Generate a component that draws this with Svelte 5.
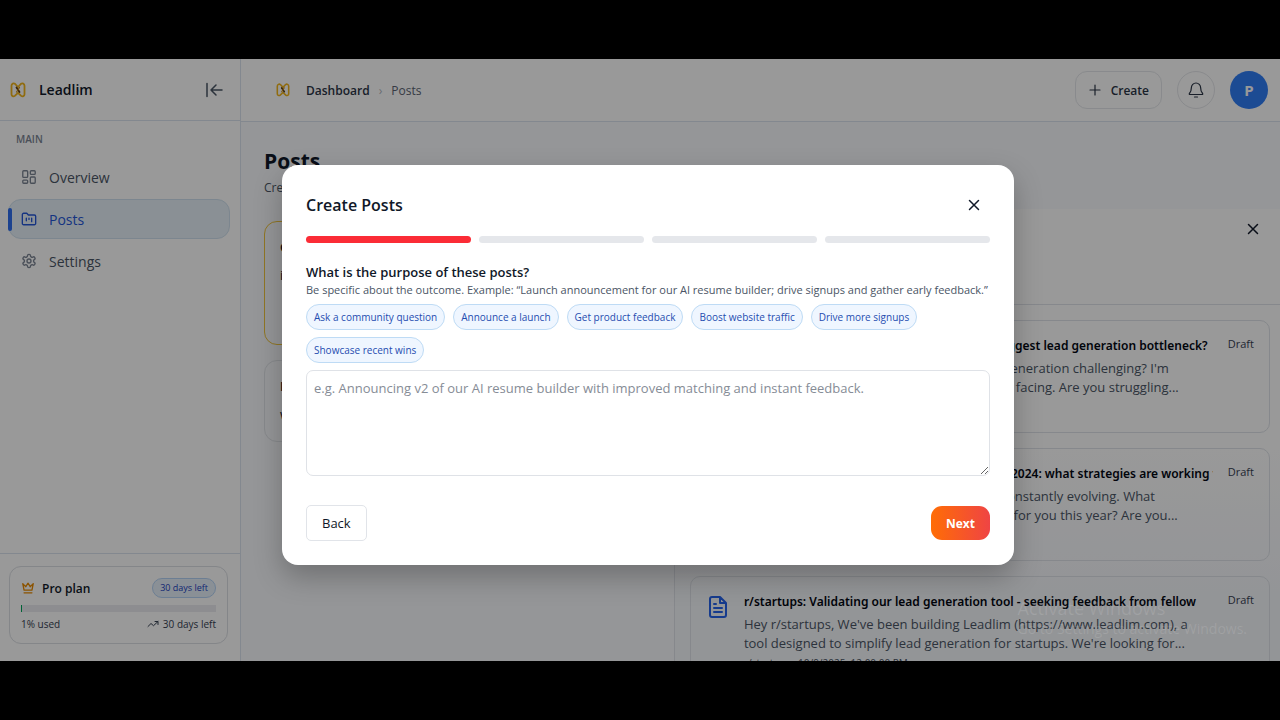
<script>
  const navItems = [
    { label: 'Overview', icon: 'grid', active: false },
    { label: 'Posts', icon: 'folder', active: true },
    { label: 'Settings', icon: 'gear', active: false }
  ];

  const suggestions = [
    'Ask a community question',
    'Announce a launch',
    'Get product feedback',
    'Boost website traffic',
    'Drive more signups',
    'Showcase recent wins'
  ];

  const posts = [
    {
      title: "r/marketing: What is currently your team's biggest lead generation bottleneck?",
      lines: ["Hey everyone, is anybody else finding lead generation challenging? I'm", "curious about the biggest bottlenecks you're facing. Are you struggling..."],
      date: 'r/marketing · 10/9/2025, 12:00:00 PM'
    },
    {
      title: 'r/marketing: Lead generation for B2B SaaS in 2024: what strategies are working for you?',
      lines: ['The lead generation landscape is certainly constantly evolving. What', 'tactics or tools have been the most effective for you this year? Are you...'],
      date: 'r/marketing · 10/9/2025, 12:00:00 PM'
    },
    {
      title: 'r/startups: Validating our lead generation tool - seeking feedback from fellow',
      lines: ["Hey r/startups, We've been building Leadlim (https://www.leadlim.com), a", "tool designed to simplify lead generation for startups. We're looking for..."],
      date: 'r/startups · 10/9/2025, 12:00:00 PM'
    }
  ];

  const totalSteps = 4;
  let step = $state(1);
  let purpose = $state('');
</script>

{#snippet logo()}
  <svg class="logo" viewBox="0 0 16 16" fill="none" stroke-linejoin="round" stroke-linecap="round" aria-hidden="true">
    <path d="M5 1.800 8 5l3-3.200c1.300-1 3.500-.3 3.500 2v8.400c0 2-2 2.700-3.300 1.700L8 10.800l-3.200 3.100c-1.300 1-3.300.3-3.300-1.700V3.800c0-2.300 2.200-3 3.500-2z" stroke="#f0b41c" stroke-width="1.800" />
    <path d="M6.500 5.500 9.500 10" stroke="#5e3d10" stroke-width="1.800" />
    <path d="M9.500 5.500 6.500 10" stroke="#c98a10" stroke-width="1.200" />
  </svg>
{/snippet}

{#snippet cross()}
  <svg class="icon" viewBox="0 0 16 16" aria-hidden="true"><path d="m3.500 3.500 9 9m0-9-9 9" /></svg>
{/snippet}

<div class="screen">
  <div class="app">
    <aside class="sidebar">
      <div class="brand">
        {@render logo()}
        <span class="brand-name">Leadlim</span>
        <button class="collapse" aria-label="Collapse sidebar">
          <svg class="icon" viewBox="0 0 20 20" aria-hidden="true"><path d="M3 3.500v13M18 10H7m5-5-5 5 5 5" /></svg>
        </button>
      </div>

      <nav>
        <p class="nav-title">MAIN</p>
        {#each navItems as item}
          <a class="nav-item" class:active={item.active} href="#{item.label.toLowerCase()}">
            {#if item.icon === 'grid'}
              <svg class="icon" viewBox="0 0 18 18" aria-hidden="true">
                <rect x="2" y="2" width="5.500" height="7.500" rx="1" /><rect x="10.500" y="2" width="5.500" height="4" rx="1" />
                <rect x="2" y="12.500" width="5.500" height="3.500" rx="1" /><rect x="10.500" y="9" width="5.500" height="7" rx="1" />
              </svg>
            {:else if item.icon === 'folder'}
              <svg class="icon" viewBox="0 0 18 18" aria-hidden="true">
                <path d="M3 2.500h3.500l1.800 2H15a1.500 1.500 0 0 1 1.500 1.500v8a1.500 1.500 0 0 1-1.500 1.500H3A1.500 1.500 0 0 1 1.500 14V4A1.500 1.500 0 0 1 3 2.500z" />
                <path d="M6 8v3M9 8v1.500M12 8v4" />
              </svg>
            {:else}
              <svg class="icon" viewBox="0 0 24 24" aria-hidden="true">
                <path stroke-width="2" d="M12.220 2h-.44a2 2 0 0 0-2 2v.18a2 2 0 0 1-1 1.730l-.43.25a2 2 0 0 1-2 0l-.15-.08a2 2 0 0 0-2.730.73l-.22.38a2 2 0 0 0 .73 2.730l.15.1a2 2 0 0 1 1 1.720v.51a2 2 0 0 1-1 1.740l-.15.09a2 2 0 0 0-.73 2.730l.22.38a2 2 0 0 0 2.730.73l.15-.08a2 2 0 0 1 2 0l.43.25a2 2 0 0 1 1 1.730V20a2 2 0 0 0 2 2h.44a2 2 0 0 0 2-2v-.18a2 2 0 0 1 1-1.730l.43-.25a2 2 0 0 1 2 0l.15.08a2 2 0 0 0 2.730-.73l.22-.39a2 2 0 0 0-.73-2.730l-.15-.08a2 2 0 0 1-1-1.740v-.5a2 2 0 0 1 1-1.740l.15-.09a2 2 0 0 0 .73-2.730l-.22-.38a2 2 0 0 0-2.730-.73l-.15.08a2 2 0 0 1-2 0l-.43-.25a2 2 0 0 1-1-1.730V4a2 2 0 0 0-2-2z" />
                <circle cx="12" cy="12" r="3" stroke-width="2" />
              </svg>
            {/if}
            {item.label}
          </a>
        {/each}
      </nav>

      <div class="plan-wrap">
        <div class="plan">
          <div class="plan-row">
            <svg class="icon crown" viewBox="0 0 16 16" aria-hidden="true"><path d="m2 3 1.500 7.500h9L14 3l-3.500 3.500L8 2.500 5.500 6.500zM3.500 13.500h9" /></svg>
            <strong>Pro plan</strong>
            <span class="days">30 days left</span>
          </div>
          <div class="usage"><div class="usage-fill" style="width: 1%"></div></div>
          <div class="plan-row small">
            <span>1% used</span>
            <span class="trend">
              <svg class="icon" viewBox="0 0 12 12" aria-hidden="true"><path d="M1 8.500 4 5.500l2.500 2.200L11 3.500M8 3.500h3v3" /></svg>
              30 days left
            </span>
          </div>
        </div>
      </div>
    </aside>

    <main>
      <header class="topbar">
        {@render logo()}
        <a class="crumb" href="#dashboard">Dashboard</a>
        <span class="sep">›</span>
        <span class="crumb-here">Posts</span>
        <div class="actions">
          <button class="create">
            <svg class="icon" viewBox="0 0 14 14" aria-hidden="true"><path d="M7 2v10M2 7h10" /></svg>
            Create
          </button>
          <button class="bell" aria-label="Notifications">
            <svg class="icon" viewBox="0 0 18 18" aria-hidden="true"><path d="M9 2a4.600 4.600 0 0 0-4.600 4.600c0 3.600-1.200 5-2 5.900-.4.400-.1 1 .5 1h12.200c.6 0 .9-.6.500-1-.8-.9-2-2.300-2-5.900A4.600 4.600 0 0 0 9 2zM7.500 16h3" /></svg>
          </button>
          <button class="avatar" aria-label="Account">P</button>
        </div>
      </header>

      <div class="intro">
        <h1>Posts</h1>
        <p>Create and manage your posts</p>
      </div>

      <div class="columns">
        <section class="groups">
          <article class="group selected"><h2>Grow community</h2><p>ideas and drafts</p></article>
          <article class="group"><h2>Product launch</h2><p>with early users</p></article>
        </section>

        <section class="detail">
          <div class="detail-head">
            <button class="close" aria-label="Close panel">{@render cross()}</button>
          </div>
          <div class="post-list">
            {#each posts as post}
              <article class="post">
                <svg class="icon doc" viewBox="0 0 24 24" aria-hidden="true"><path d="M14 2H6a2 2 0 0 0-2 2v16a2 2 0 0 0 2 2h12a2 2 0 0 0 2-2V8zM14 2v6h6M8 9h2M8 13h8M8 17h8" /></svg>
                <div class="post-text">
                  <h3>{post.title}</h3>
                  {#each post.lines as line}
                    <p>{line}</p>
                  {/each}
                  <small>{post.date}</small>
                </div>
                <span class="status">Draft</span>
              </article>
            {/each}
          </div>
        </section>
      </div>
    </main>

    <div class="overlay">
      <div class="modal" role="dialog" aria-modal="true" aria-labelledby="modal-title">
        <div class="modal-head">
          <h2 id="modal-title">Create Posts</h2>
          <button class="close" aria-label="Close">{@render cross()}</button>
        </div>
        <div class="steps">
          {#each Array(totalSteps) as _, i}
            <div class="step" class:done={i < step}></div>
          {/each}
        </div>
        <label for="purpose">What is the purpose of these posts?</label>
        <p class="hint">Be specific about the outcome. Example: “Launch announcement for our AI resume builder; drive signups and gather early feedback.”</p>
        <div class="chips">
          {#each suggestions as text}
            <button class="chip" onclick={() => (purpose = text)}>{text}</button>
          {/each}
        </div>
        <textarea id="purpose" bind:value={purpose} placeholder="e.g. Announcing v2 of our AI resume builder with improved matching and instant feedback."></textarea>
        <div class="modal-foot">
          <button class="back" onclick={() => (step = Math.max(1, step - 1))}>Back</button>
          <button class="next" onclick={() => (step = Math.min(totalSteps, step + 1))}>Next</button>
        </div>
      </div>
    </div>

    <div class="watermark">
      <div class="watermark-title">Activate Windows</div>
      <div>Go to Settings to activate Windows.</div>
    </div>
  </div>
</div>

<style>
  :global(body) {
    margin: 0;
    background: #000;
  }

  .screen {
    box-sizing: border-box;
    height: 100vh;
    padding: 59px 0;
    background: #000;
    font-family: 'Open Sans', 'Noto Sans', sans-serif;
    font-size: 13px;
    color: #101828;
  }

  .screen :is(div, aside, section, article, button, textarea, a, span) {
    box-sizing: border-box;
  }

  h1, h2, h3, p {
    margin: 0;
  }

  button {
    padding: 0;
    border: 0;
    background: none;
    color: inherit;
    font: inherit;
    cursor: pointer;
  }

  a {
    color: inherit;
    text-decoration: none;
  }

  .icon {
    flex: none;
    width: 16px;
    height: 16px;
    fill: none;
    stroke: currentColor;
    stroke-width: 1.5;
    stroke-linecap: round;
    stroke-linejoin: round;
  }

  .logo {
    flex: none;
    width: 16px;
    height: 16px;
  }

  .app {
    position: relative;
    display: flex;
    height: 100%;
    overflow: hidden;
    background: #fff;
  }

  /* sidebar */
  .sidebar {
    display: flex;
    flex: none;
    flex-direction: column;
    width: 241px;
    border-right: 1px solid #dbe3ee;
  }

  .brand {
    display: flex;
    align-items: center;
    height: 62px;
    padding: 0 16px 0 10px;
    border-bottom: 1px solid #dbe3ee;
  }

  .brand-name {
    margin-left: 13px;
    font-size: 14px;
    font-weight: 600;
  }

  .collapse {
    display: flex;
    margin-left: auto;
    color: #4a5565;
  }

  .collapse .icon {
    width: 20px;
    height: 20px;
  }

  nav {
    display: flex;
    flex: 1;
    flex-direction: column;
    gap: 2px;
    padding: 9px 10px 0 8px;
  }

  .nav-title {
    padding: 0 8px;
    margin-bottom: 7px;
    font-size: 10px;
    line-height: 18px;
    font-weight: 600;
    color: #7b8493;
  }

  .nav-item {
    position: relative;
    display: flex;
    align-items: center;
    gap: 12px;
    height: 40px;
    padding: 0 12px;
    border: 1px solid transparent;
    border-radius: 13px;
    font-size: 14px;
    color: #4a5565;
  }

  .nav-item .icon {
    color: #7b8493;
  }

  .nav-item.active {
    border-color: #cfe0ee;
    background: #e6f1f9;
    color: #2456d8;
  }

  .nav-item.active .icon {
    color: #2456d8;
  }

  .nav-item.active::before {
    content: '';
    position: absolute;
    left: -1px;
    top: 8px;
    width: 4px;
    height: 23px;
    border-radius: 2px;
    background: #2f6fee;
  }

  .plan-wrap {
    padding: 12px 12px 17px 9px;
    border-top: 1px solid #dbe3ee;
  }

  .plan {
    padding: 11px;
    border: 1px solid #dcdfe4;
    border-radius: 12px;
  }

  .plan-row {
    display: flex;
    align-items: center;
  }

  .plan-row strong {
    margin-left: 7px;
    font-size: 12px;
    font-weight: 600;
  }

  .crown {
    width: 14px;
    height: 14px;
    color: #e88a00;
  }

  .days {
    margin-left: auto;
    padding: 0 7px;
    border: 1px solid #b5d3f5;
    border-radius: 10px;
    background: #e6f1fb;
    font-size: 9px;
    line-height: 18px;
    color: #1d3fc0;
  }

  .usage {
    height: 7px;
    margin: 7px 0 4px;
    background: #ebecf0;
  }

  .usage-fill {
    height: 100%;
    background: linear-gradient(90deg, #00a65a 50%, transparent 50%);
  }

  .small {
    justify-content: space-between;
    font-size: 10px;
    line-height: 16px;
    color: #364153;
  }

  .trend {
    display: flex;
    align-items: center;
    gap: 4px;
  }

  .trend .icon {
    width: 12px;
    height: 12px;
    stroke-width: 1;
  }

  /* main area */
  main {
    display: flex;
    flex: 1;
    flex-direction: column;
    min-width: 0;
    background: #f8fafd;
  }

  .topbar {
    display: flex;
    flex: none;
    align-items: center;
    box-sizing: border-box;
    height: 63px;
    padding: 0 12px 0 35px;
    border-bottom: 1px solid #dbe3ee;
    background: #fff;
    font-size: 12px;
  }

  .topbar .logo {
    width: 14px;
    height: 14px;
  }

  .crumb {
    margin-left: 16px;
    font-weight: 600;
    color: #2b3546;
  }

  .sep {
    margin: 0 9px;
    color: #b0b6c0;
  }

  .crumb-here {
    color: #5a6372;
  }

  .actions {
    display: flex;
    align-items: center;
    gap: 15px;
    margin-left: auto;
  }

  .create {
    display: flex;
    align-items: center;
    gap: 9px;
    height: 38px;
    padding: 0 12px;
    border: 1px solid #e5e7eb;
    border-radius: 12px;
    font-weight: 600;
    color: #2b3546;
  }

  .create .icon {
    width: 14px;
    height: 14px;
    stroke-width: 1.2;
  }

  .bell {
    display: flex;
    align-items: center;
    justify-content: center;
    width: 38px;
    height: 38px;
    border: 1px solid #e5e7eb;
    border-radius: 50%;
    color: #2b3546;
  }

  .bell .icon {
    width: 18px;
    height: 18px;
    stroke-width: 1.2;
  }

  .avatar {
    width: 38px;
    height: 38px;
    border-radius: 50%;
    background: #2f7df6;
    font-size: 15px;
    font-weight: 700;
    color: #fff;
  }

  .intro {
    padding: 23px 24px 12px 23px;
  }

  .intro h1 {
    font-size: 21px;
    line-height: 32px;
    font-weight: 700;
  }

  .intro p {
    margin-top: 2px;
    font-size: 12px;
    line-height: 18px;
    color: #4a5565;
  }

  .columns {
    display: grid;
    grid-template-columns: 5fr 7fr;
    flex: 1;
    min-height: 0;
  }

  .groups {
    display: flex;
    flex-direction: column;
    gap: 15px;
    min-width: 0;
    padding: 12px 16px 0 23px;
  }

  .group {
    height: 82px;
    padding: 15px;
    border: 1px solid #e1e4e9;
    border-radius: 13px;
  }

  .group.selected {
    height: 124px;
    border-color: #f0c53c;
  }

  .group h2 {
    font-size: 13px;
    line-height: 20px;
  }

  .group p {
    margin-top: 8px;
    line-height: 20px;
  }

  .detail {
    min-width: 0;
    border-left: 1px solid #dfe3e9;
    background: linear-gradient(#fff 50%, #f6f8fc 80%);
  }

  .detail-head {
    display: flex;
    align-items: flex-start;
    justify-content: flex-end;
    height: 96px;
    padding: 4px 11px;
    border-bottom: 1px solid #dfe3e9;
  }

  .close {
    display: flex;
    align-items: center;
    justify-content: center;
    width: 32px;
    height: 32px;
  }

  .post-list {
    display: flex;
    flex-direction: column;
    gap: 15px;
    padding: 15px 10px 0 15px;
  }

  .post {
    display: flex;
    flex: none;
    height: 113px;
    padding: 15px 15px 0 15px;
    border: 1px solid #dfe3e9;
    border-radius: 10px;
    overflow: hidden;
  }

  .doc {
    width: 24px;
    height: 24px;
    margin: 3px 14px 0 0;
    color: #2563eb;
    stroke-width: 2;
  }

  .post-text {
    flex: 1;
    min-width: 0;
    color: #4a5565;
  }

  .post-text h3 {
    margin-bottom: 3px;
    overflow: hidden;
    font-family: 'Noto Sans', sans-serif;
    font-size: 12px;
    line-height: 20px;
    font-weight: 600;
    white-space: nowrap;
    color: #030712;
  }

  .post-text p {
    overflow: hidden;
    line-height: 19px;
    white-space: nowrap;
  }

  .post-text small {
    display: block;
    font-size: 10px;
    line-height: 20px;
  }

  .status {
    margin-left: 15px;
    font-size: 11px;
    line-height: 16px;
    font-weight: 500;
    color: #364153;
  }

  /* modal */
  .overlay {
    position: absolute;
    inset: 0;
    display: flex;
    align-items: center;
    justify-content: center;
    padding: 10px 0 0 16px;
    background: rgba(0, 0, 0, 0.4);
  }

  .modal {
    width: 732px;
    padding: 24px;
    border-radius: 16px;
    background: #fff;
    box-shadow: 0 12px 28px rgba(0, 0, 0, 0.25);
  }

  .modal-head {
    display: flex;
    align-items: center;
    justify-content: space-between;
  }

  .modal-head h2 {
    font-size: 16px;
    font-weight: 600;
  }

  .steps {
    display: flex;
    gap: 8px;
    margin: 15px 0 20px;
  }

  .step {
    flex: 1;
    height: 7px;
    border-radius: 4px;
    background: #e5e7eb;
  }

  .step.done {
    background: #fb2c36;
  }

  .modal label {
    display: block;
    font-size: 13px;
    line-height: 18px;
    font-weight: 600;
  }

  .hint {
    font-size: 11px;
    line-height: 18px;
    color: #4a5565;
  }

  .chips {
    display: flex;
    flex-wrap: wrap;
    gap: 7px 8px;
    margin: 5px 0 7px;
  }

  .chip {
    height: 26px;
    padding: 0 7px;
    border: 1px solid #bedbf5;
    border-radius: 13px;
    background: #eff6ff;
    font-size: 10px;
    color: #1f4db0;
  }

  textarea {
    display: block;
    width: 100%;
    height: 106px;
    padding: 7px;
    border: 1px solid #dfe2e7;
    border-radius: 7px;
    font: inherit;
    line-height: 20px;
    resize: vertical;
  }

  textarea::placeholder {
    color: #868c96;
  }

  .modal-foot {
    display: flex;
    align-items: center;
    justify-content: space-between;
    margin-top: 29px;
  }

  .back {
    height: 36px;
    padding: 0 15px;
    border: 1px solid #e1e4e9;
    border-radius: 5px;
    font-size: 13px;
  }

  .next {
    height: 34px;
    padding: 0 15px;
    border-radius: 11px;
    background: linear-gradient(90deg, #ff6d05, #ef4444);
    font-size: 12px;
    font-weight: 700;
    color: #fff;
  }

  .watermark {
    position: absolute;
    right: 33px;
    bottom: 22px;
    font-size: 14px;
    line-height: 20px;
    color: rgba(255, 255, 255, 0.12);
    pointer-events: none;
  }

  .watermark-title {
    font-size: 18px;
    line-height: 22px;
  }
</style>
